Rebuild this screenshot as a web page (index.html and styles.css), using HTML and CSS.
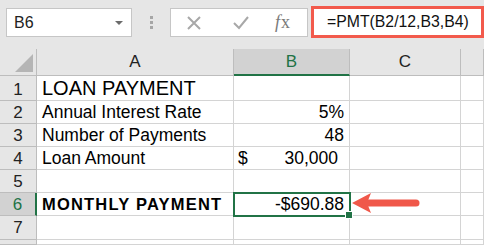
FILE: index.html
```html
<!DOCTYPE html>
<html lang="en">
<head>
  <meta charset="UTF-8">
  <meta name="viewport" content="width=device-width, initial-scale=1.0">
  <title>PMT</title>
  <link rel="stylesheet" href="styles.css">
</head>
<body>
  <div class="toolbar">
    <div class="name-box">
      <span>B6</span>
      <span class="caret"></span>
    </div>
    <div class="dots"><i></i><i></i><i></i></div>
    <div class="formula-tools">
      <svg class="tool-x" width="16" height="16" viewBox="0 0 16 16"><path d="M2 2 L14 14 M14 2 L2 14" stroke="#a8a8a8" stroke-width="2" fill="none"/></svg>
      <svg class="tool-check" width="18" height="16" viewBox="0 0 18 16"><path d="M2 8 L7 13 L16 2" stroke="#a8a8a8" stroke-width="2" fill="none"/></svg>
      <span class="fx"><i>f</i>x</span>
    </div>
    <div class="formula">=PMT(B2/12,B3,B4)</div>
  </div>

  <div class="sheet">
    <div class="corner"><span class="tri"></span></div>
    <div class="col-head">A</div>
    <div class="col-head col-head--active">B</div>
    <div class="col-head">C</div>
    <div class="col-head"></div>

    <div class="row-head row-head--tall">1</div>
    <div class="cell title">LOAN PAYMENT</div>
    <div class="cell"></div>
    <div class="cell"></div>
    <div class="cell"></div>

    <div class="row-head">2</div>
    <div class="cell">Annual Interest Rate</div>
    <div class="cell num">5%</div>
    <div class="cell"></div>
    <div class="cell"></div>

    <div class="row-head">3</div>
    <div class="cell">Number of Payments</div>
    <div class="cell num">48</div>
    <div class="cell"></div>
    <div class="cell"></div>

    <div class="row-head">4</div>
    <div class="cell">Loan Amount</div>
    <div class="cell money"><span>$</span><span>30,000</span></div>
    <div class="cell"></div>
    <div class="cell"></div>

    <div class="row-head">5</div>
    <div class="cell"></div>
    <div class="cell"></div>
    <div class="cell"></div>
    <div class="cell"></div>

    <div class="row-head row-head--active">6</div>
    <div class="cell bold">MONTHLY PAYMENT</div>
    <div class="cell num selected">-$690.88
      <svg class="arrow" width="70" height="24" viewBox="0 0 70 24">
        <path d="M0 10 L19 0 L15 10 L19 20 Z" fill="#f0584a"/>
        <path d="M14 10 L64 10" stroke="#f0584a" stroke-width="7" stroke-linecap="round"/>
      </svg>
    </div>
    <div class="cell"></div>
    <div class="cell"></div>

    <div class="row-head">7</div>
    <div class="cell"></div>
    <div class="cell"></div>
    <div class="cell"></div>
    <div class="cell"></div>

    <div class="row-head"></div>
    <div class="cell"></div>
    <div class="cell"></div>
    <div class="cell"></div>
    <div class="cell"></div>
  </div>
</body>
</html>
```

FILE: styles.css
```css
body {
  margin: 0;
  padding: 0;
  width: 484px;
  height: 245px;
  overflow: hidden;
  background: #ffffff;
  font-family: "Liberation Sans", Arial, sans-serif;
  color: #000;
}

.toolbar {
  display: flex;
  align-items: flex-start;
  height: 49px;
  background: #e6e6e6;
  box-sizing: border-box;
  padding: 8px 0 0 6px;
}

.name-box {
  width: 126px;
  height: 29px;
  box-sizing: border-box;
  background: #fff;
  border: 1px solid #c6c6c6;
  display: flex;
  align-items: center;
  justify-content: space-between;
  padding: 0 8px 0 7px;
  font-size: 16px;
  color: #222;
}

.caret {
  width: 0;
  height: 0;
  border-left: 4px solid transparent;
  border-right: 4px solid transparent;
  border-top: 4px solid #6b6b6b;
}

.dots {
  width: 38px;
  height: 29px;
  display: flex;
  flex-direction: column;
  align-items: center;
  justify-content: center;
  gap: 2px;
}

.dots i {
  width: 3px;
  height: 3px;
  background: #a6a6a6;
}

.formula-tools {
  width: 138px;
  height: 29px;
  box-sizing: border-box;
  background: #fff;
  border: 1px solid #c6c6c6;
  display: flex;
  align-items: center;
  padding-left: 15px;
}

.tool-check {
  margin-left: 30px;
}

.fx {
  margin-left: 25px;
  font-family: "Liberation Serif", serif;
  font-size: 18px;
  color: #7a7a7a;
}

.fx i {
  margin-right: 1px;
}

.formula {
  margin: -2px 0 0 3px;
  width: 173px;
  height: 32px;
  box-sizing: border-box;
  background: #fff;
  border: 3px solid #f25a4c;
  padding-left: 13px;
  font-size: 15.8px;
  line-height: 26px;
  color: #111;
}

.sheet {
  display: grid;
  grid-template-columns: 37px 197px 116px 111px 1fr;
  grid-template-rows: 27px 25px 23px 23px 23px 23px 23px 24px 5px;
}

.corner,
.col-head,
.row-head {
  background: #e6e6e6;
  box-sizing: border-box;
  border-right: 1px solid #bdbdbd;
  border-bottom: 1px solid #bdbdbd;
  color: #222;
}

.corner {
  position: relative;
}

.tri {
  position: absolute;
  right: 3px;
  bottom: 3px;
  width: 0;
  height: 0;
  border-left: 18px solid transparent;
  border-bottom: 18px solid #b5b5b5;
}

.col-head {
  font-size: 17px;
  text-align: center;
  line-height: 26px;
}

.col-head--active {
  background: #d2d2d2;
  color: #217346;
  border-bottom: 2px solid #217346;
}

.row-head {
  font-size: 17px;
  text-align: center;
  line-height: 23px;
}

.row-head--tall {
  line-height: 25px;
  padding-top: 1px;
}

.row-head--active {
  background: #d2d2d2;
  color: #217346;
  border-right: 2px solid #217346;
}

.cell {
  box-sizing: border-box;
  border-right: 1px solid #d4d4d4;
  border-bottom: 1px solid #d4d4d4;
  font-size: 17.5px;
  line-height: 22px;
  padding: 0 5px;
  white-space: nowrap;
}

.title {
  font-size: 20px;
  line-height: 25px;
}

.bold {
  font-weight: bold;
  font-size: 16.5px;
  letter-spacing: 1.2px;
}

.num {
  text-align: right;
}

.money {
  display: flex;
  justify-content: space-between;
  padding: 0 11px 0 4px;
}

.selected {
  position: relative;
  outline: 2px solid #217346;
  outline-offset: -1px;
}

.selected::after {
  content: "";
  position: absolute;
  right: -4px;
  bottom: -4px;
  width: 6px;
  height: 6px;
  background: #217346;
  border: 1px solid #fff;
}

.arrow {
  position: absolute;
  left: 118px;
  top: 0;
}
```
